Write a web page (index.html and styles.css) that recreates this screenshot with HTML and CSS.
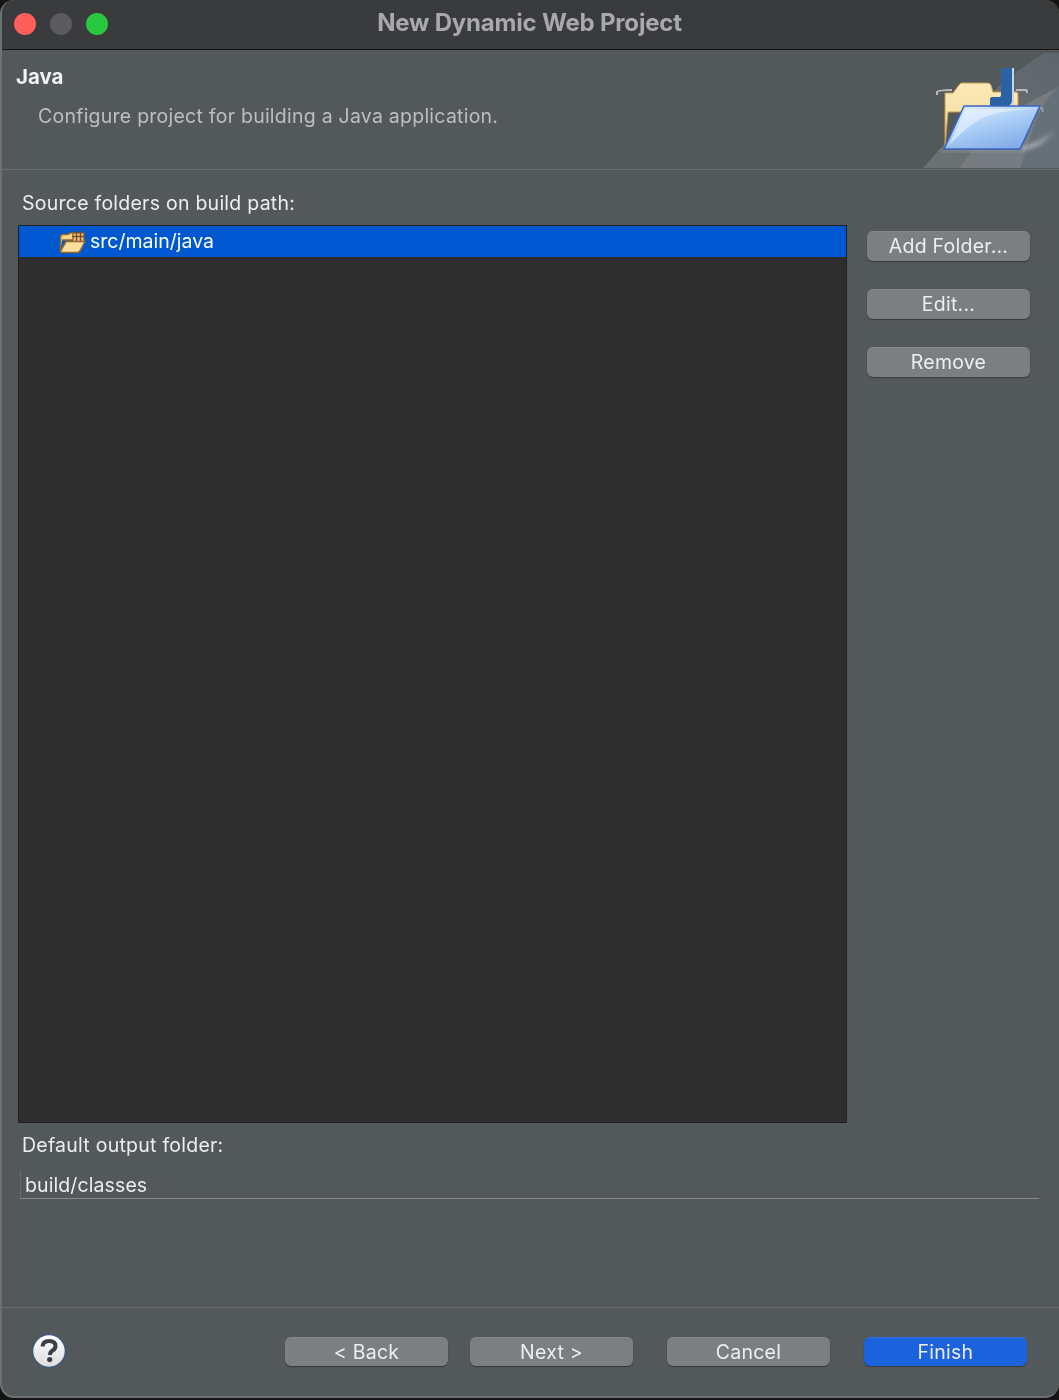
FILE: index.html
```html
<!DOCTYPE html>
<html lang="en">
<head>
<meta charset="utf-8">
<title>New Dynamic Web Project</title>
<link rel="stylesheet" href="styles.css">
</head>
<body>
<div class="window">
  <header class="titlebar">
    <div class="lights">
      <span class="light red"></span>
      <span class="light grey"></span>
      <span class="light green"></span>
    </div>
    <div class="wintitle">New Dynamic Web Project</div>
  </header>
  <section class="banner">
    <div class="banner-text">
      <div class="banner-title">Java</div>
      <div class="banner-desc">Configure project for building a Java application.</div>
    </div>
    <svg class="banner-art" width="139" height="119" viewBox="0 0 139 119">
      <defs>
        <linearGradient id="front" x1="0.2" y1="0" x2="0.8" y2="1">
          <stop offset="0" stop-color="#dcedff"/>
          <stop offset="0.45" stop-color="#a9cdf6"/>
          <stop offset="1" stop-color="#7ea8e6"/>
        </linearGradient>
        <linearGradient id="back" x1="0" y1="0" x2="0" y2="1">
          <stop offset="0" stop-color="#fbe9b8"/>
          <stop offset="1" stop-color="#f4d995"/>
        </linearGradient>
        <linearGradient id="fan" x1="0" y1="1" x2="1" y2="0">
          <stop offset="0" stop-color="#6d7274"/>
          <stop offset="1" stop-color="#5f666b"/>
        </linearGradient>
        <linearGradient id="streak" x1="0" y1="1" x2="1" y2="0">
          <stop offset="0" stop-color="#c9cbcc"/>
          <stop offset="1" stop-color="#7d8489"/>
        </linearGradient>
        <filter id="soft" x="-20%" y="-40%" width="140%" height="180%">
          <feGaussianBlur stdDeviation="2"/>
        </filter>
      </defs>
      <path d="M3 118 L44 72 Q80 30 124 3 H139 V118 Z" fill="url(#fan)"/>
      <path d="M40 118 L58 90 Q90 60 139 37 V118 Z" fill="#777c80"/>
      <path d="M100 118 L112 82 Q122 50 139 37 V118 Z" fill="#667079"/>
      <path d="M101 98 Q120 92 135 80 Q128 92 112 98 L101 100 Z" fill="url(#streak)" filter="url(#soft)"/>
      <path d="M20 100 H101 V102 H20 Z" fill="#93979a" filter="url(#soft)"/>
      <path d="M17 45 V42 Q18 40 32 40 M96 40 H106 Q107 40 107 43" stroke="#b8babc" stroke-width="2" fill="none"/>
      <path d="M118 58 H122 L123 62" stroke="#a4a7a9" stroke-width="1.5" fill="none"/>
      <path d="M25 98 V43 H33 L39 35 Q40 33 42 33 H68 Q70 33 71 35 L73 42 H96 Q98 42 98 44 V62 H28 Z" fill="url(#back)" stroke="#c39a4d" stroke-width="1"/>
      <path d="M70 56 V49 Q70 47 72 47 H79 Q81 47 81 45 V18 H92 V50 Q92 56 86 56 Z" fill="#2b62a6"/>
      <path d="M92 18 H94 V56 H92 Z" fill="#c8d4e4"/>
      <path d="M24 99 L44 56 H120 L100 99 Z" fill="url(#front)" stroke="#3a63c0" stroke-width="1.6" stroke-linejoin="round"/>
      <path d="M29 95 L46 59 H114 Q82 60 62 68 Q48 76 29 95 Z" fill="#f0f8ff" opacity="0.55"/>
    </svg>
  </section>
  <main class="content">
    <div class="label">Source folders on build path:</div>
    <div class="source-row">
      <div class="tree">
        <div class="tree-row">
          <svg class="pkg-icon" width="27" height="24" viewBox="0 0 27 24">
            <path d="M1.5 20 V7 Q1.5 4.5 4 4.5 H9 L11 3 H18 V10 H3" fill="#f7d68e" stroke="#96662c" stroke-width="1.6"/>
            <path d="M14 3 H25 V12 H14 Z" fill="#ecc97f" stroke="#855428" stroke-width="1.2"/>
            <path d="M17.5 1 V12 M21.5 1 V12 M13 6.5 H26" stroke="#7a4c22" stroke-width="1.5" fill="none"/>
            <path d="M1.5 21 L7 11.5 H26 L21 21 Q20 22.5 18 22.5 H3.5 Q1.5 22.5 1.5 21 Z" fill="#fbdd9e" stroke="#96662c" stroke-width="1.6" stroke-linejoin="round"/>
          </svg>
          <span class="tree-label">src/main/java</span>
        </div>
      </div>
      <div class="side-buttons">
        <button class="btn" type="button">Add Folder...</button>
        <button class="btn" type="button">Edit...</button>
        <button class="btn" type="button">Remove</button>
      </div>
    </div>
    <div class="label output-label">Default output folder:</div>
    <div class="field">build/classes</div>
  </main>
  <footer class="footer">
    <svg class="help" width="36" height="36" viewBox="0 0 36 36">
      <defs>
        <linearGradient id="helpbg" x1="0" y1="0" x2="0" y2="1">
          <stop offset="0" stop-color="#ffffff"/>
          <stop offset="1" stop-color="#dcdcdc"/>
        </linearGradient>
      </defs>
      <circle cx="18" cy="18" r="16.4" fill="url(#helpbg)" stroke="#3f5a80" stroke-width="1.4"/>
      <path d="M11.5 13.5 Q12 8 18 8 Q24.5 8 24.5 13 Q24.5 16 21.5 17.6 Q19 19 19 22" fill="none" stroke="#3a3f4a" stroke-width="4"/>
      <circle cx="18.7" cy="26.6" r="2.6" fill="#3a3f4a"/>
    </svg>
    <div class="nav-buttons">
      <button class="btn btn-back" type="button">&lt; Back</button>
      <button class="btn btn-next" type="button">Next &gt;</button>
      <button class="btn btn-cancel" type="button">Cancel</button>
      <button class="btn btn-primary" type="button">Finish</button>
    </div>
  </footer>
</div>
</body>
</html>
```

FILE: styles.css
```css
* { box-sizing: border-box; }
html, body { margin: 0; padding: 0; background: #141414; }
body { width: 1059px; height: 1400px; overflow: hidden; font-family: Inter, "Liberation Sans", sans-serif; }

.window {
  width: 1059px;
  height: 1398px;
  background: #53585b;
  border-radius: 14px;
  border-left: 2px solid #6d7173;
  border-bottom: 2px solid #6d7173;
  overflow: hidden;
  display: flex;
  flex-direction: column;
  filter: blur(0.35px);
}

.titlebar {
  height: 50px;
  flex: none;
  background: #3a3b3d;
  border-bottom: 1px solid #151515;
  display: grid;
  grid-template-columns: 1fr auto 1fr;
  align-items: center;
  margin-left: -2px;
}
.lights { display: flex; gap: 14px; padding: 0 0 2px 14px; }
.light { width: 22px; height: 22px; border-radius: 50%; }
.red { background: #fe5f57; }
.grey { background: #5a5b5d; }
.green { background: #28c83f; }
.wintitle { font-size: 24px; font-weight: 700; color: #a8a9ab; letter-spacing: -0.2px; padding-bottom: 5px; }

.banner {
  height: 120px;
  flex: none;
  display: flex;
  justify-content: space-between;
  border-bottom: 1px solid #6a6f72;
}
.banner-text { padding: 13px 0 0 14px; }
.banner-title { font-size: 20.5px; font-weight: 700; color: #f2f2f2; line-height: 28px; }
.banner-desc { font-size: 19.5px; color: #bcbfc0; padding: 11px 0 0 22px; line-height: 28px; letter-spacing: 0.24px; }
.banner-art { align-self: flex-end; flex: none; }

.content { flex: none; padding: 19px 20px 0 16px; height: 1137px; }
.label { font-size: 19.5px; color: #ecedee; line-height: 28px; padding-left: 4px; letter-spacing: 0.25px; }

.source-row { display: flex; margin-top: 8px; gap: 20px; }
.tree {
  width: 829px;
  height: 898px;
  background: #2e2e2e;
  border: 1px solid #1f1f1f;
  flex: none;
}
.tree-row {
  height: 31px;
  background: #0058d0;
  color: #fff;
  font-size: 19.5px;
  display: flex;
  align-items: center;
  gap: 4px;
  padding-left: 40px;
}
.tree-label { padding-bottom: 2px; }
.pkg-icon { flex: none; }

.side-buttons { display: flex; flex-direction: column; gap: 28.5px; padding-top: 6px; }
.btn {
  width: 163px;
  height: 29.5px;
  border: 0;
  border-radius: 6px;
  padding: 0;
  background: #7b7f81;
  box-shadow: 0 1px 1px rgba(0,0,0,.35), inset 0 1px 0 rgba(255,255,255,.08);
  color: #eeeeee;
  font: 19.5px Inter, "Liberation Sans", sans-serif;
  letter-spacing: 0.25px;
}

.output-label { margin-top: 8px; }
.field {
  margin: 11px 0 0 2px;
  width: 1019px;
  height: 29px;
  border-left: 1px solid #676b6e;
  border-bottom: 1px solid #85898b;
  color: #ecedee;
  font-size: 19.5px;
  line-height: 30px;
  padding-left: 4px;
  letter-spacing: 0.1px;
}

.footer {
  flex: 1;
  border-top: 1px solid #686c6f;
  display: flex;
  align-items: center;
  justify-content: space-between;
  padding: 0 32px 0 29px;
}
.help { flex: none; margin-top: -2px; }
.nav-buttons { display: flex; margin-top: -1px; }
.btn-next { margin-left: 22px; }
.btn-cancel { margin-left: 34px; }
.btn-primary { margin-left: 34px; background: #1b63dd; }
```
